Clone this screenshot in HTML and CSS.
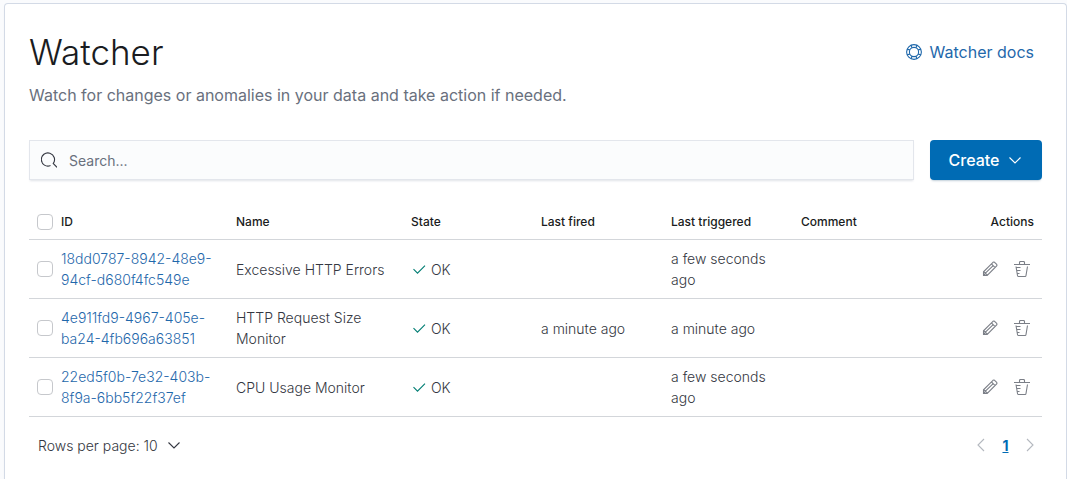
FILE: index.html
```html
<!DOCTYPE html>
<html lang="en">
<head>
<meta charset="utf-8">
<meta name="viewport" content="width=device-width, initial-scale=1">
<title>Watcher</title>
<link rel="stylesheet" href="styles.css">
</head>
<body>
<svg class="sprite" aria-hidden="true">
  <symbol id="check" viewBox="0 0 16 16"><path d="M2.500 8.200l4 4 7.500-7.500"/></symbol>
  <symbol id="down" viewBox="0 0 16 16"><path d="M2.500 5.500l5.500 5.500 5.500-5.500"/></symbol>
  <symbol id="pencil" viewBox="0 0 16 16"><path d="M1.500 14.500v-3.700L11 1.300q.8-.6 1.600 0l2.100 2.100q.6.800 0 1.600L5.200 14.500zM9.400 2.900l3.700 3.700M1.800 10.700l3.500 3.500M3.400 12.200l7.800-7.500M1.500 12.500l2 2"/></symbol>
  <symbol id="trash" viewBox="0 0 16 16"><path d="M0 3.500h16M5.500 3.500v-2q0-1 1-1h3q1 0 1 1v2M2.500 6.500h4M3 9.500h3.500M3.500 12.500h2M2 5.500l1.500 9q.2 1 1 1h6.500q.9 0 1-1l1.500-9"/></symbol>
</svg>
<main class="panel">
  <header class="page-header">
    <h1 class="title">Watcher</h1>
    <a class="docs" href="#docs">
      <svg class="icon" viewBox="0 0 16 16" aria-hidden="true"><circle cx="8" cy="8" r="7.400"/><circle cx="8" cy="8" r="4.600"/><path d="M5.300 1.100L5.900 3.900M10.700 1.100L10.100 3.900M5.900 12.100l-.6 2.800M10.100 12.100l.6 2.800M1.100 5.300l2.800.6M1.100 10.700l2.800-.6M12.100 5.900l2.800-.6M12.100 10.100l2.800.6"/></svg>
      Watcher docs
    </a>
  </header>
  <p class="subtitle">Watch for changes or anomalies in your data and take action if needed.</p>
  <div class="toolbar">
    <label class="search">
      <svg class="icon" viewBox="0 0 16 16" aria-hidden="true"><path d="M9.500 13.600A6.600 6.600 0 1 1 12.200 11.500L16 15.400"/></svg>
      <input class="search-input" type="search" placeholder="Search..." aria-label="Search">
    </label>
    <button class="create" type="button">Create <svg class="icon small" aria-hidden="true"><use href="#down"/></svg></button>
  </div>
  <table class="watches">
    <colgroup><col class="col-check"><col class="col-wide"><col class="col-wide"><col class="col-mid"><col class="col-mid"><col class="col-mid"><col><col></colgroup>
    <thead>
      <tr>
        <th class="check-cell"><input class="checkbox" type="checkbox" aria-label="Select all rows"></th>
        <th>ID</th><th>Name</th><th>State</th><th>Last fired</th><th>Last triggered</th><th>Comment</th><th class="right">Actions</th>
      </tr>
    </thead>
    <tbody>
      <tr>
        <td class="check-cell"><input class="checkbox" type="checkbox" aria-label="Select Excessive HTTP Errors"></td>
        <td><a class="link" href="#w1">18dd0787-8942-48e9-94cf-d680f4fc549e</a></td>
        <td>Excessive HTTP Errors</td>
        <td><span class="state"><svg class="icon small ok" aria-hidden="true"><use href="#check"/></svg>OK</span></td>
        <td></td>
        <td>a few seconds ago</td>
        <td></td>
        <td><div class="actions"><button class="icon-button" type="button" aria-label="Edit"><svg class="icon" aria-hidden="true"><use href="#pencil"/></svg></button><button class="icon-button" type="button" aria-label="Delete"><svg class="icon" aria-hidden="true"><use href="#trash"/></svg></button></div></td>
      </tr>
      <tr>
        <td class="check-cell"><input class="checkbox" type="checkbox" aria-label="Select HTTP Request Size Monitor"></td>
        <td><a class="link" href="#w2">4e911fd9-4967-405e-ba24-4fb696a63851</a></td>
        <td>HTTP Request Size Monitor</td>
        <td><span class="state"><svg class="icon small ok" aria-hidden="true"><use href="#check"/></svg>OK</span></td>
        <td>a minute ago</td>
        <td>a minute ago</td>
        <td></td>
        <td><div class="actions"><button class="icon-button" type="button" aria-label="Edit"><svg class="icon" aria-hidden="true"><use href="#pencil"/></svg></button><button class="icon-button" type="button" aria-label="Delete"><svg class="icon" aria-hidden="true"><use href="#trash"/></svg></button></div></td>
      </tr>
      <tr>
        <td class="check-cell"><input class="checkbox" type="checkbox" aria-label="Select CPU Usage Monitor"></td>
        <td><a class="link" href="#w3">22ed5f0b-7e32-403b-8f9a-6bb5f22f37ef</a></td>
        <td>CPU Usage Monitor</td>
        <td><span class="state"><svg class="icon small ok" aria-hidden="true"><use href="#check"/></svg>OK</span></td>
        <td></td>
        <td>a few seconds ago</td>
        <td></td>
        <td><div class="actions"><button class="icon-button" type="button" aria-label="Edit"><svg class="icon" aria-hidden="true"><use href="#pencil"/></svg></button><button class="icon-button" type="button" aria-label="Delete"><svg class="icon" aria-hidden="true"><use href="#trash"/></svg></button></div></td>
      </tr>
    </tbody>
  </table>
  <footer class="footer">
    <button class="rows" type="button">Rows per page: 10 <svg class="icon small" aria-hidden="true"><use href="#down"/></svg></button>
    <nav class="pager" aria-label="Pagination">
      <button class="icon-button page-arrow" type="button" disabled aria-label="Previous page"><svg class="icon" viewBox="0 0 16 16" aria-hidden="true"><path d="M11 2L5 8l6 6"/></svg></button>
      <a class="page" href="#page-1" aria-current="page">1</a>
      <button class="icon-button page-arrow" type="button" disabled aria-label="Next page"><svg class="icon" viewBox="0 0 16 16" aria-hidden="true"><path d="M5 2l6 6-6 6"/></svg></button>
    </nav>
  </footer>
</main>
</body>
</html>
```
FILE: styles.css
```css
* { box-sizing: border-box; }
html { background: #fafbfd; }
body {
  margin: 0;
  padding: 3px 0 0 4px;
  min-height: 100vh;
  display: flex;
  font-family: Inter, "Liberation Sans", sans-serif;
  font-size: 14px;
  font-weight: 300;
  line-height: 21px;
  color: #343741;
}
button, input { font: inherit; color: inherit; }
button { border: 0; background: none; padding: 0; cursor: pointer; }
.sprite { position: absolute; width: 0; height: 0; }
.icon { width: 16px; height: 16px; flex: none; fill: none; stroke: currentColor; stroke-width: 1.1; }
.panel {
  flex: 1;
  min-width: 0;
  padding: 24px;
  background: #fff;
  border: 1px solid #d3dae6;
  border-bottom: 0;
  border-radius: 4px 4px 0 0;
  box-shadow: 0 2px 2px -1px rgba(152, 162, 179, .3);
}
.page-header { display: flex; justify-content: space-between; align-items: center; padding-right: 8px; }
.title { margin: 0; font-size: 35px; line-height: 48px; font-weight: 300; color: #1a1c21; }
.docs { display: flex; align-items: center; gap: 8px; font-size: 16px; font-weight: 400; line-height: 24px; color: #1f68ab; text-decoration: none; }
.subtitle { margin: 7px 0 33px; font-size: 16px; font-weight: 400; line-height: 24px; color: #69707d; }
.toolbar { display: flex; gap: 16px; margin-bottom: 24px; }
.search {
  flex: 1;
  display: flex;
  align-items: center;
  gap: 12px;
  height: 40px;
  padding: 0 11px;
  background: #fbfcfd;
  border: 1px solid #e3e6ec;
  box-shadow: 0 2px 2px -1px rgba(152, 162, 179, .3);
}
.search-input { flex: 1; min-width: 0; padding: 0; border: 0; outline: 0; background: none; font-weight: 400; }
.search-input::placeholder { color: #69707d; opacity: 1; }
.create {
  display: flex;
  align-items: center;
  justify-content: center;
  gap: 8px;
  width: 112px;
  height: 40px;
  border-radius: 4px;
  background: #006bb4;
  color: #fff;
  font-size: 16px;
  font-weight: 500;
  box-shadow: 0 2px 2px -1px rgba(54, 97, 126, .3);
}
.watches { width: 100%; table-layout: fixed; border-collapse: separate; border-spacing: 0; }
.col-check { width: 24px; }
.col-wide { width: 175px; }
.col-mid { width: 130px; }
.watches th, .watches td { padding: 8px; text-align: left; vertical-align: middle; border-bottom: 1px solid #d3d6da; }
.watches th { height: 36px; padding-top: 0; padding-bottom: 0; font-size: 12px; font-weight: 500; color: #1a1c21; }
.watches .check-cell { padding-right: 0; }
.watches .right { text-align: right; }
.checkbox {
  display: block;
  appearance: none;
  width: 16px;
  height: 16px;
  margin: 0;
  border: 1px solid #c6c8cc;
  border-radius: 4px;
  background: #fff;
}
.link { color: #1f68ab; text-decoration: none; }
.state { display: flex; align-items: center; gap: 4px; }
.ok { color: #017d73; }
.actions { display: flex; justify-content: flex-end; gap: 8px; }
.icon-button { display: flex; align-items: center; justify-content: center; width: 24px; height: 24px; color: #7b7f87; }
.footer { display: flex; align-items: center; justify-content: space-between; height: 40px; margin-top: 8px; padding-left: 9px; }
.rows { display: flex; align-items: center; gap: 8px; }
.pager { display: flex; align-items: center; }
.page { width: 25px; text-align: center; font-weight: 700; color: #006bb4; }
.page-arrow { color: #b4b8bf; }
```
